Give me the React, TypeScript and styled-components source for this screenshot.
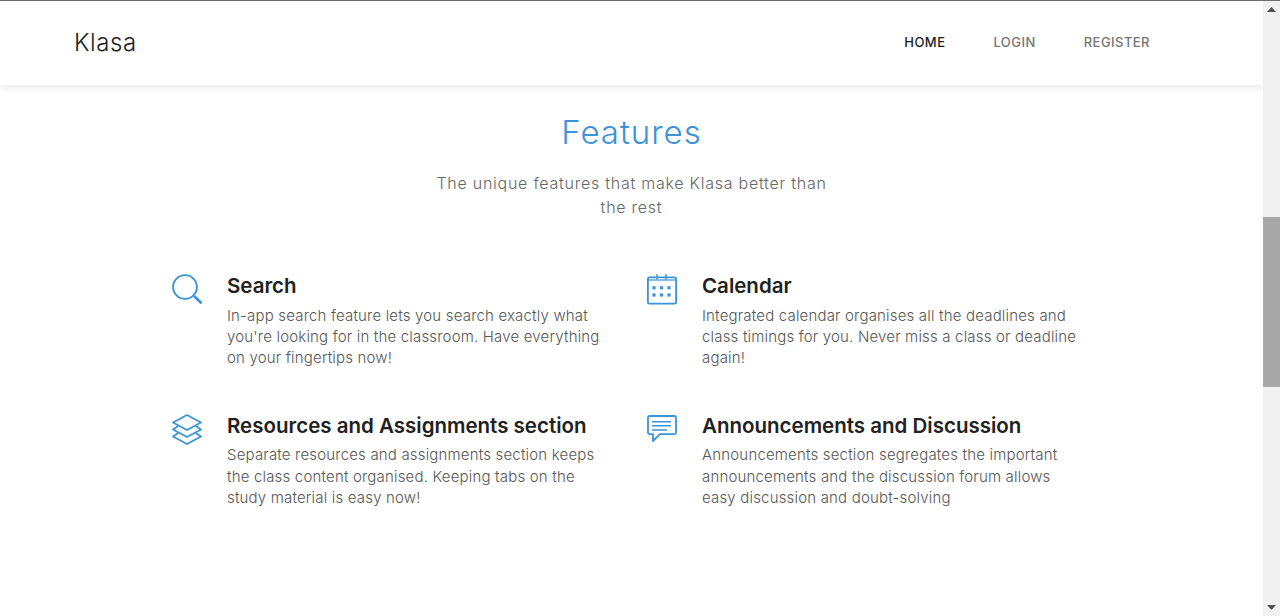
import React from "react";
import styled, { createGlobalStyle } from "styled-components";

const Global = createGlobalStyle`
  html, body { margin: 0; padding: 0; height: 100%; overflow: hidden; background: #fff; }
  #root { height: 100%; }
  * { box-sizing: border-box; }
`;

const Page = styled.div`
  display: flex;
  height: 616px;
  border-top: 1px solid #6f6f6f;
  font-family: Inter, "Liberation Sans", sans-serif;
  color: #212121;
`;

const Main = styled.div`
  flex: 1;
  min-width: 0;
`;

const Header = styled.header`
  height: 84px;
  display: flex;
  align-items: center;
  justify-content: space-between;
  padding: 0 113px 2px 74px;
  background: #fff;
  box-shadow: 0 2px 10px rgba(0, 0, 0, 0.1);
`;

const Brand = styled.div`
  font-size: 24px;
  font-weight: 300;
  letter-spacing: 0.55px;
  color: #222;
`;

const Nav = styled.nav`
  display: flex;
  gap: 48px;
`;

const NavLink = styled.a<{ $active?: boolean }>`
  font-size: 13px;
  font-weight: 500;
  letter-spacing: 0.45px;
  color: ${(p) => (p.$active ? "#1c1c1c" : "#757575")};
`;

const Section = styled.section`
  display: flex;
  flex-direction: column;
  align-items: center;
  padding-top: 27px;
`;

const Title = styled.h1`
  margin: 0;
  font-size: 33px;
  line-height: 40px;
  font-weight: 300;
  letter-spacing: 1px;
  color: #3b93d8;
`;

const Subtitle = styled.p`
  margin: 19px 0 0;
  font-size: 16px;
  line-height: 24px;
  font-weight: 300;
  letter-spacing: 0.75px;
  text-align: center;
  color: #666;
`;

const Grid = styled.div`
  align-self: flex-start;
  margin: 54px 0 0 172px;
  display: grid;
  grid-template-columns: 475px 475px;
  row-gap: 44px;
`;

const Feature = styled.article`
  display: flex;
  gap: 25px;
`;

const IconBox = styled.div`
  width: 30px;
  height: 32px;
  flex: none;
  margin-top: 1px;
  color: #3b93d8;
  svg { display: block; }
`;

const FeatureTitle = styled.h2`
  margin: 0;
  font-size: 20.5px;
  line-height: 25px;
  font-weight: 600;
  letter-spacing: 0;
  color: #212121;
`;

const FeatureText = styled.p`
  margin: 6.5px 0 0;
  font-size: 15px;
  line-height: 21.4px;
  font-weight: 300;
  letter-spacing: 0.18px;
  white-space: nowrap;
  color: #555;
`;

const Scrollbar = styled.aside`
  width: 17px;
  flex: none;
  display: flex;
  flex-direction: column;
  background: #f1f1f1;
`;

const ArrowButton = styled.div`
  height: 17px;
  display: flex;
  align-items: center;
  justify-content: center;
  color: #505050;
`;

const Track = styled.div`
  flex: 1;
  padding-top: 199px;
`;

const Thumb = styled.div`
  height: 170px;
  background: #a8a8a8;
`;

const SearchIcon = () => (
  <svg width="30" height="32" viewBox="0 0 30 32" fill="none" stroke="currentColor" strokeLinecap="round">
    <circle cx="13" cy="13" r="11.9" strokeWidth="1.9" />
    <path d="M21.5 21.5 L23 23" strokeWidth="1.5" />
    <path d="M23 23 L28.7 28.5" strokeWidth="2.7" />
  </svg>
);

const CalendarIcon = () => (
  <svg width="30" height="32" viewBox="0 0 30 32" fill="none" stroke="currentColor">
    <rect x="0.9" y="3.4" width="28.2" height="26.2" rx="1.6" strokeWidth="1.8" />
    <path d="M1 6 H29" strokeWidth="1.2" />
    <path d="M10 0.3 V5.5 M19 0.3 V5.5" strokeWidth="1.5" />
    <g fill="currentColor" stroke="none">
      <rect x="5.4" y="12.2" width="3.2" height="3.2" />
      <rect x="12.9" y="12.2" width="3.2" height="3.2" />
      <rect x="20.4" y="12.2" width="3.2" height="3.2" />
      <rect x="5.4" y="19.4" width="3.2" height="3.2" />
      <rect x="12.9" y="19.4" width="3.2" height="3.2" />
      <rect x="20.4" y="19.4" width="3.2" height="3.2" />
    </g>
  </svg>
);

const LayersIcon = () => (
  <svg width="30" height="32" viewBox="0 0 30 32" fill="none" stroke="currentColor" strokeWidth="1.8" strokeLinejoin="round" strokeLinecap="round">
    <path d="M15 1 L29 8.5 L15 16 L1 8.5 Z" />
    <path d="M5.5 12.5 L1 15.5 L15 23 L29 15.5 L24.5 12.5" />
    <path d="M5.5 19.5 L1 22.5 L15 30 L29 22.5 L24.5 19.5" />
  </svg>
);

const ChatIcon = () => (
  <svg width="30" height="32" viewBox="0 0 30 32" fill="none" stroke="currentColor">
    <path d="M2.5 2 H27.5 A1.6 1.6 0 0 1 29 3.6 V18.6 A1.6 1.6 0 0 1 27.5 20.2 H13 L6 27 V20.2 H2.5 A1.6 1.6 0 0 1 1 18.6 V3.6 A1.6 1.6 0 0 1 2.5 2 Z" strokeWidth="1.8" strokeLinejoin="round" />
    <path d="M5 7.7 H24 M5 11.7 H24 M5 16 H20" strokeWidth="1.5" />
  </svg>
);

const features = [
  { icon: <SearchIcon />, title: "Search", lines: ["In-app search feature lets you search exactly what", "you're looking for in the classroom. Have everything", "on your fingertips now!"] },
  { icon: <CalendarIcon />, title: "Calendar", lines: ["Integrated calendar organises all the deadlines and", "class timings for you. Never miss a class or deadline", "again!"] },
  { icon: <LayersIcon />, title: "Resources and Assignments section", lines: ["Separate resources and assignments section keeps", "the class content organised. Keeping tabs on the", "study material is easy now!"] },
  { icon: <ChatIcon />, title: "Announcements and Discussion", lines: ["Announcements section segregates the important", "announcements and the discussion forum allows", "easy discussion and doubt-solving"] },
];

export default function App() {
  return (
    <>
      <Global />
      <Page>
        <Main>
          <Header>
            <Brand>Klasa</Brand>
            <Nav>
              <NavLink $active>HOME</NavLink>
              <NavLink>LOGIN</NavLink>
              <NavLink>REGISTER</NavLink>
            </Nav>
          </Header>
          <Section>
            <Title>Features</Title>
            <Subtitle>
              The unique features that make Klasa better than
              <br />
              the rest
            </Subtitle>
            <Grid>
              {features.map((f) => (
                <Feature key={f.title}>
                  <IconBox>{f.icon}</IconBox>
                  <div>
                    <FeatureTitle>{f.title}</FeatureTitle>
                    <FeatureText>
                      {f.lines.map((l, i) => (
                        <React.Fragment key={l}>
                          {i > 0 && <br />}
                          {l}
                        </React.Fragment>
                      ))}
                    </FeatureText>
                  </div>
                </Feature>
              ))}
            </Grid>
          </Section>
        </Main>
        <Scrollbar>
          <ArrowButton>
            <svg width="9" height="5" viewBox="0 0 9 5"><path d="M4.5 0 L9 5 H0 Z" fill="currentColor" /></svg>
          </ArrowButton>
          <Track>
            <Thumb />
          </Track>
          <ArrowButton>
            <svg width="9" height="5" viewBox="0 0 9 5"><path d="M0 0 H9 L4.5 5 Z" fill="currentColor" /></svg>
          </ArrowButton>
        </Scrollbar>
      </Page>
    </>
  );
}
